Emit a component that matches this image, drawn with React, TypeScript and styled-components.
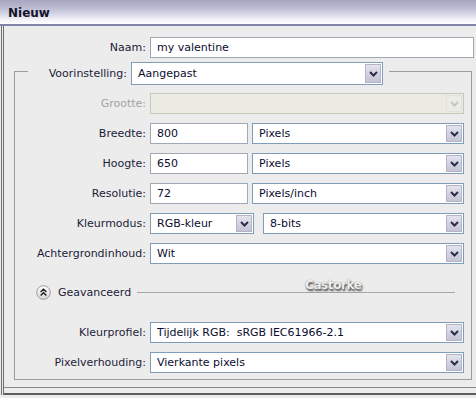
import React from "react";
import styled, { createGlobalStyle } from "styled-components";

const Global = createGlobalStyle`
  html, body { margin: 0; padding: 0; background: #ececec; }
  body {
    font-family: "DejaVu Sans", Verdana, sans-serif;
    font-size: 11px;
    color: #1c1c38;
  }
  * { box-sizing: border-box; }
`;

const Window = styled.div`
  position: relative;
  width: 476px;
  height: 398px;
  overflow: hidden;
  display: flex;
  flex-direction: column;
  background: #ececec;
`;

const TitleBar = styled.div`
  flex: none;
  height: 26px;
  padding: 2px 0 0 8px;
  display: flex;
  align-items: center;
  border-bottom: 2px solid #8484a8;
  background: linear-gradient(
    to bottom,
    #a6a6c2 0%,
    #b4b4cc 25%,
    #d2d2e2 55%,
    #f2f2f7 82%,
    #ffffff 100%
  );
  font-weight: bold;
  font-size: 12px;
  color: #14142c;
`;

const Body = styled.div`
  flex: 1;
  margin-bottom: 3px;
  padding: 11px 2px 0 3px;
  display: flex;
  flex-direction: column;
  box-shadow: inset 1px 0 0 #ececec, inset 2px 0 0 #6e6e6e,
    inset 3px 0 0 #ececec, inset 4px 0 0 #6e6e6e,
    inset 0 -2px 0 #5e5e5e, inset 0 -7px 0 #ececec, inset 0 -8px 0 #8a8a8a;
`;

const Row = styled.div<{ $label: number }>`
  display: grid;
  grid-template-columns: ${(p) => p.$label}px 1fr;
  column-gap: 4px;
  align-items: center;
  height: 21px;
`;

const Label = styled.span<{ $disabled?: boolean }>`
  text-align: right;
  white-space: nowrap;
  color: ${(p) => (p.$disabled ? "#a4a4a4" : "#1c1c38")};
`;

const Pair = styled.div<{ $first: number; $gap: number }>`
  display: grid;
  grid-template-columns: ${(p) => p.$first}px 1fr;
  column-gap: ${(p) => p.$gap}px;
  height: 21px;
`;

const TextField = styled.div`
  height: 21px;
  display: flex;
  align-items: center;
  padding-left: 6px;
  background: #ffffff;
  border: 1px solid #9fa8b3;
  color: #0c0c30;
  white-space: nowrap;
  overflow: hidden;
`;

const SelectBox = styled.div<{ $disabled?: boolean; $h?: number }>`
  height: ${(p) => p.$h ?? 21}px;
  display: flex;
  align-items: center;
  padding-left: 6px;
  background: ${(p) => (p.$disabled ? "#ebebe4" : "#ffffff")};
  border: 1px solid ${(p) => (p.$disabled ? "#c9c7ba" : "#7f9db9")};
  color: #0c0c30;
  white-space: nowrap;
  overflow: hidden;
`;

const SelectText = styled.span`
  flex: 1;
  overflow: hidden;
  white-space: pre;
`;

const DropButton = styled.span<{ $disabled?: boolean }>`
  flex: none;
  width: 16px;
  align-self: stretch;
  margin: 1px;
  display: flex;
  align-items: center;
  justify-content: center;
  border: 1px solid ${(p) => (p.$disabled ? "#e2e2da" : "#b4b4c8")};
  background: ${(p) =>
    p.$disabled
      ? "#ecece6"
      : "linear-gradient(to bottom, #e4e4ee 0%, #cfcfde 60%, #c4c4d4 100%)"};
`;

const Group = styled.fieldset`
  margin: 0 2px 0 11px;
  padding: 8px 7px 6px 0;
  border: 1px solid #9c9c9c;
  min-width: 0;
  display: flex;
  flex-direction: column;
  gap: 9px;
`;

const Legend = styled.legend`
  margin-left: 13px;
  padding: 4px 6px 0 0;
  display: flex;
  align-items: center;
  gap: 4px;
`;

const LegendLabel = styled(Label)`
  width: 99px;
`;

const LegendSelect = styled(SelectBox)`
  width: 252px;
`;

const AdvancedRow = styled.div`
  display: flex;
  align-items: center;
  height: 15px;
  margin: 12px 0 13px;
  padding-left: 21px;
`;

const AdvancedText = styled.span`
  margin-left: 7px;
  color: #1c1c38;
`;

const Rule = styled.span`
  flex: 1;
  height: 1px;
  margin: 0 9px 0 6px;
  background: #a8a8a8;
`;

const Watermark = styled.span`
  position: absolute;
  left: 305px;
  top: 278px;
  font-family: "DejaVu Sans", Verdana, sans-serif;
  font-weight: bold;
  font-size: 12px;
  color: #eeeeee;
  text-shadow: 1px 2px 2px #4a4a4a, 0 0 1px #777;
  letter-spacing: -0.4px;
`;

const Chevron = ({ disabled }: { disabled?: boolean }) => (
  <svg width="9" height="6" viewBox="0 0 9 6">
    <path
      d="M1 1 L4.5 4.5 L8 1"
      fill="none"
      stroke={disabled ? "#c6c6be" : "#2c2c4c"}
      strokeWidth="2"
    />
  </svg>
);

const Select = ({
  value,
  disabled,
  h,
}: {
  value: string;
  disabled?: boolean;
  h?: number;
}) => (
  <SelectBox $disabled={disabled} $h={h}>
    <SelectText>{value}</SelectText>
    <DropButton $disabled={disabled}>
      <Chevron disabled={disabled} />
    </DropButton>
  </SelectBox>
);

const CollapseIcon = () => (
  <svg width="15" height="15" viewBox="0 0 15 15">
    <defs>
      <linearGradient id="cg" x1="0" y1="0" x2="0" y2="1">
        <stop offset="0" stopColor="#ffffff" />
        <stop offset="1" stopColor="#d6d6d6" />
      </linearGradient>
    </defs>
    <circle cx="7.5" cy="7.5" r="6.8" fill="url(#cg)" stroke="#9a9a9a" />
    <path
      d="M4.6 7 L7.5 4.3 L10.4 7 M4.6 10.4 L7.5 7.7 L10.4 10.4"
      fill="none"
      stroke="#1e1e1e"
      strokeWidth="1.4"
    />
  </svg>
);

export default function App() {
  return (
    <>
      <Global />
      <Window>
        <TitleBar>Nieuw</TitleBar>
        <Body>
          <Row $label={143}>
            <Label>Naam:</Label>
            <TextField>my valentine</TextField>
          </Row>
          <Group>
            <Legend>
              <LegendLabel>Voorinstelling:</LegendLabel>
              <LegendSelect $h={23}>
                <SelectText>Aangepast</SelectText>
                <DropButton>
                  <Chevron />
                </DropButton>
              </LegendSelect>
            </Legend>
            <Row $label={131}>
              <Label $disabled>Grootte:</Label>
              <Select value="" disabled />
            </Row>
            <Row $label={131}>
              <Label>Breedte:</Label>
              <Pair $first={98} $gap={4}>
                <TextField>800</TextField>
                <Select value="Pixels" />
              </Pair>
            </Row>
            <Row $label={131}>
              <Label>Hoogte:</Label>
              <Pair $first={98} $gap={4}>
                <TextField>650</TextField>
                <Select value="Pixels" />
              </Pair>
            </Row>
            <Row $label={131}>
              <Label>Resolutie:</Label>
              <Pair $first={98} $gap={4}>
                <TextField>72</TextField>
                <Select value="Pixels/inch" />
              </Pair>
            </Row>
            <Row $label={131}>
              <Label>Kleurmodus:</Label>
              <Pair $first={104} $gap={9}>
                <Select value="RGB-kleur" />
                <Select value="8-bits" />
              </Pair>
            </Row>
            <Row $label={131}>
              <Label>Achtergrondinhoud:</Label>
              <Select value="Wit" />
            </Row>
            <AdvancedRow>
              <CollapseIcon />
              <AdvancedText>Geavanceerd</AdvancedText>
              <Rule />
            </AdvancedRow>
            <Row $label={131}>
              <Label>Kleurprofiel:</Label>
              <Select value="Tijdelijk RGB:  sRGB IEC61966-2.1" />
            </Row>
            <Row $label={131}>
              <Label>Pixelverhouding:</Label>
              <Select value="Vierkante pixels" />
            </Row>
          </Group>
        </Body>
        <Watermark>Castorke</Watermark>
      </Window>
    </>
  );
}
